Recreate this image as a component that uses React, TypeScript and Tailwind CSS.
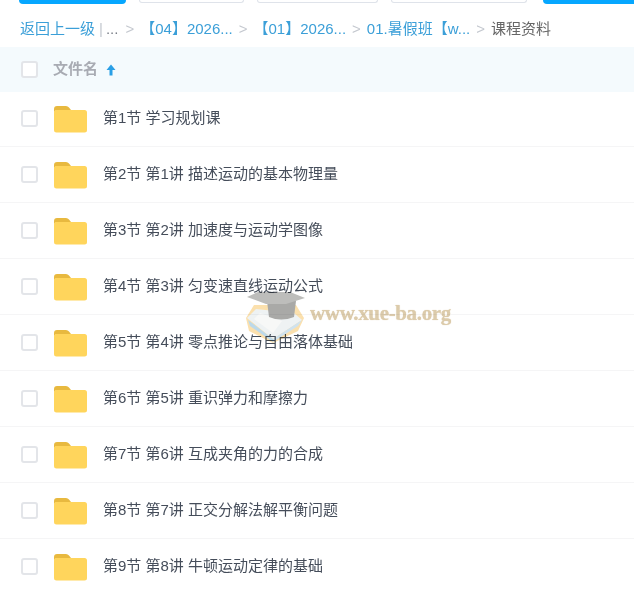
const rows = [
  '第1节 学习规划课',
  '第2节 第1讲 描述运动的基本物理量',
  '第3节 第2讲 加速度与运动学图像',
  '第4节 第3讲 匀变速直线运动公式',
  '第5节 第4讲 零点推论与自由落体基础',
  '第6节 第5讲 重识弹力和摩擦力',
  '第7节 第6讲 互成夹角的力的合成',
  '第8节 第7讲 正交分解法解平衡问题',
  '第9节 第8讲 牛顿运动定律的基础',
];

function FolderIcon() {
  return (
    <svg width="33" height="27" viewBox="0 0 33 27" className="shrink-0 mt-[2px]">
      <path d="M0 3a3 3 0 0 1 3-3h9a4 4 0 0 1 3 1.500l2 2.500H4a4 4 0 0 0-4 4z" fill="#e8b93f" />
      <rect x="0" y="4" width="33" height="22.500" rx="2.500" fill="#ffd55c" />
    </svg>
  );
}

function Checkbox() {
  return <span className="block w-[17px] h-[17px] rounded-[3px] border-2 border-[#e3e5e9] bg-white shrink-0" />;
}

function Sep() {
  return <span className="text-[#c4c8cf] mx-[6px]">&gt;</span>;
}

function Watermark() {
  return (
    <div className="absolute left-[246px] top-[289px] flex items-start pointer-events-none mix-blend-multiply">
      <svg width="60" height="55" viewBox="0 0 60 55" className="shrink-0">
        <path d="M0 29 L8 16 L50 16 L58 29 L52 42 L27 54 L3 42 Z" fill="#fbe0ad" />
        <path d="M1 29 L27 50 L56 31 L48 24 L10 20 Z" fill="#eef2f3" />
        <path d="M2 31 L27 50 L27 53 L4 37 Z" fill="#bcd9ea" />
        <path d="M27 50 L56 31 L52 37 L27 53 Z" fill="#cfe2ee" />
        <path d="M14 24 L36 32 L27 44 L8 30 Z" fill="#f7f8f7" />
        <path d="M21 12 L50 12 L48 28 Q35 33 23 28 Z" fill="#a9a9a7" />
        <path d="M1 8 L12 3 L44 3 L59 9 L40 15 L20 15 Z" fill="#bdbdbb" />
      </svg>
      <span className="ml-[4px] mt-[12px] font-['Liberation_Serif',serif] font-bold text-[21px] leading-[24px] tracking-[-0.350px] text-[#dccbab] [text-shadow:0_0_1px_#dccbab] whitespace-nowrap">
        www.xue-ba.org
      </span>
    </div>
  );
}

export default function App() {
  return (
    <div className="relative w-[634px] h-[592px] overflow-hidden bg-white font-['Liberation_Sans','Noto_Sans_CJK_SC',sans-serif]">
      <div className="flex h-[4px] pl-[19px] gap-[13px]">
        <div className="w-[107px] h-[4px] rounded-b-[6px] bg-[#06a7ff] shrink-0" />
        <div className="w-[105px] h-[3px] rounded-b-[6px] border border-t-0 border-[#dfe3ea] shrink-0" />
        <div className="w-[121px] h-[3px] rounded-b-[6px] border border-t-0 border-[#dfe3ea] shrink-0" />
        <div className="w-[136px] h-[3px] rounded-b-[6px] border border-t-0 border-[#dfe3ea] shrink-0" />
        <div className="w-[110px] h-[4px] rounded-bl-[6px] bg-[#06a7ff] shrink-0 ml-[3px]" />
      </div>

      <div className="h-[43px] pt-[7px] flex items-center pl-[20px] text-[15px] text-[#3b9fd8] whitespace-nowrap">
        <span>返回上一级</span>
        <span className="text-[#c4c8cf] ml-[4px]">|</span>
        <span className="text-[#7a7f88] ml-[3px] mr-px">...</span>
        <Sep />
        <span>【04】2026...</span>
        <Sep />
        <span>【01】2026...</span>
        <Sep />
        <span>01.暑假班【w...</span>
        <Sep />
        <span className="text-[#666]">课程资料</span>
      </div>

      <div className="relative h-[45px] flex items-center bg-[#f4fafd] pl-[21px]">
        <Checkbox />
        <span className="ml-[15px] text-[15px] font-bold text-[#a8abb3]">文件名</span>
        <svg width="10" height="12" viewBox="0 0 10 12" className="ml-[8px]">
          <path d="M5 0.500 L9.500 6 H6.500 V11.500 H3.500 V6 H0.500 Z" fill="#2a9fe6" />
        </svg>
      </div>

      <div className="-mt-px">
        {rows.map((name) => (
          <div key={name} className="h-[56px] flex items-center pl-[21px] border-b border-[#f5f5f6]">
            <Checkbox />
            <span className="ml-[16px]"><FolderIcon /></span>
            <span className="ml-[16px] text-[15px] text-[#454d5a] whitespace-nowrap">{name}</span>
          </div>
        ))}
      </div>

      <Watermark />
    </div>
  );
}
